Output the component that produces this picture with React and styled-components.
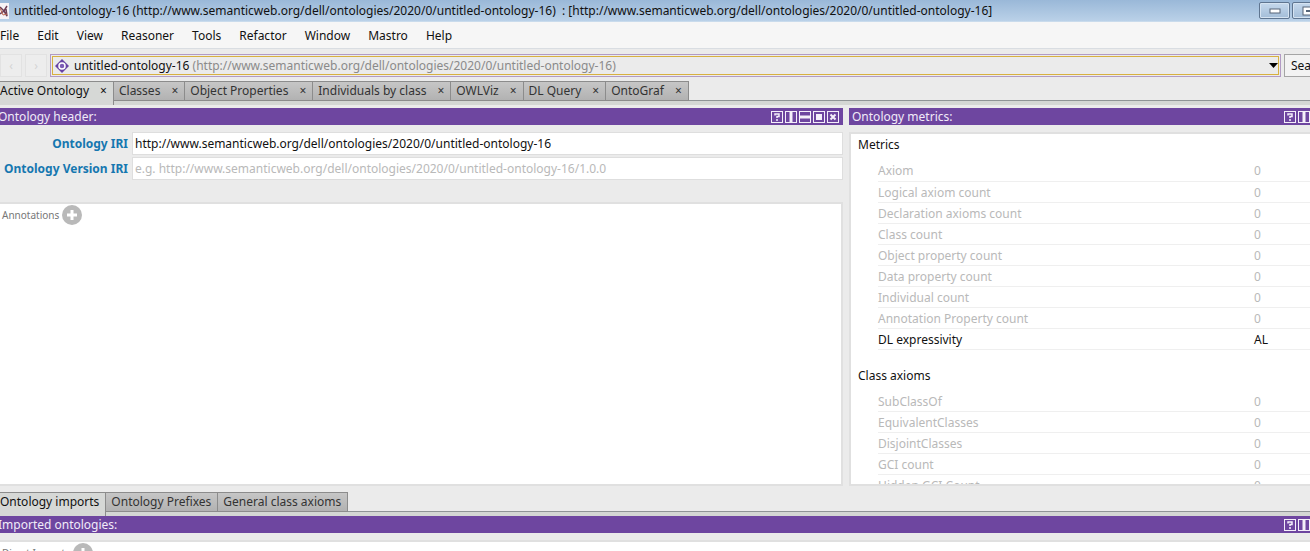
import React, { useState } from 'react';
import styled, { createGlobalStyle } from 'styled-components';

const GlobalStyle = createGlobalStyle`
  * {
    box-sizing: border-box;
  }
  body {
    margin: 0;
    overflow: hidden;
    background: #ebebeb;
    color: #111;
    font: 12px/20px "Noto Sans", "Open Sans", sans-serif;
  }
  button, input {
    font: inherit;
    color: inherit;
  }
`;

/* the window is wider than the screen on both sides */
const Window = styled.div`
  display: flex;
  flex-direction: column;
  height: 100vh;
  margin: 0 -51px 0 -5px;
`;

const TitleBar = styled.header`
  display: flex;
  align-items: center;
  flex: none;
  height: 22px;
  padding: 0 5px 0 0;
  background: linear-gradient(#9ab8d8, #bad1e8);
  border-bottom: 1px solid #c9dbec;
  white-space: pre;
`;

const AppIcon = styled.svg`
  flex: none;
  width: 14px;
  height: 16px;
  margin-right: 5px;
`;

const WindowTitle = styled.h1`
  flex: 1;
  margin: 0;
  font-size: 12px;
  line-height: 20px;
  font-weight: 400;
`;

const WindowButton = styled.button`
  display: flex;
  align-items: center;
  justify-content: center;
  width: 31px;
  height: 17px;
  margin-left: 2px;
  padding: 0;
  border: 1px solid #5f7590;
  border-radius: 2px;
  background: linear-gradient(#c5d8ec, #a3bdd8);
  box-shadow: inset 0 0 0 1px #d5e3f1;
`;

const MenuBar = styled.nav`
  display: flex;
  flex: none;
  gap: 18px;
  height: 27px;
  padding: 4px 5px 2px;
  background: #f6f6f6;
  border-bottom: 1px solid #d9dde2;
`;

const MenuItem = styled.button`
  padding: 0;
  border: 0;
  background: none;
`;

const Toolbar = styled.div`
  display: flex;
  flex: none;
  gap: 3px;
  height: 32px;
  padding: 5px 5px 4px;
`;

const NavButton = styled.button`
  width: 22px;
  padding: 0;
  border: 1px solid #e2e2e2;
  background: #ededed;
  color: #d4d4d4;
`;

const OntologyPicker = styled.button`
  display: flex;
  align-items: center;
  flex: 1;
  gap: 4px;
  padding: 0 2px 0 3px;
  border: 1px solid #b29ac4;
  outline: 1px solid #d8b040;
  outline-offset: -3px;
  background: #ebebeb;
  text-align: left;
`;

const PickerText = styled.span`
  flex: 1;
  span {
    color: #8a8a8a;
  }
`;

const SearchButton = styled.button`
  width: 72px;
  padding: 0 6px;
  border: 1px solid #a5a5a5;
  background: #f3f3f3;
  text-align: left;
`;

const TabStrip = styled.div`
  display: flex;
  flex: none;
  height: 24px;
  background: linear-gradient(#ebebeb 19px, #8f9496 19px, #8f9496 20px, #d4d7d4 20px);
`;

const Tab = styled.button`
  display: flex;
  align-items: center;
  gap: 11px;
  height: ${props => props.$active ? '24px' : '20px'};
  padding: 0 6px ${props => props.$active ? '5px' : 0} 5px;
  border: solid #8c8c8c;
  border-width: 1px 1px ${props => props.$active ? 0 : '1px'} 0;
  background: ${props => props.$active ? '#d6d8d6' : 'linear-gradient(#c6c6c6, #b2b2b2)'};
  color: ${props => props.$active ? '#111' : '#333'};
  white-space: nowrap;
`;

const Workspace = styled.main`
  display: grid;
  flex: 1;
  grid-template-columns: 848fr 507fr;
  gap: 6px;
  min-height: 0;
  padding: 3px 5px 6px 0;
`;

const Pane = styled.section`
  display: flex;
  flex-direction: column;
  min-width: 0;
  min-height: 0;
`;

const PaneBar = styled.div`
  display: flex;
  align-items: center;
  flex: none;
  gap: 2px;
  height: 17px;
  padding: 0 4px 0 3px;
  background: #6e46a0;
  color: #f1ebf8;
`;

const PaneTitle = styled.h2`
  flex: 1;
  margin: 0;
  font-size: 12px;
  line-height: 17px;
  font-weight: 400;
`;

const PaneButton = styled.button`
  display: flex;
  width: 12px;
  height: 12px;
  padding: 0;
  border: 0;
  background: none;
`;

const HeaderForm = styled.form`
  display: grid;
  flex: none;
  grid-template-columns: 133px 1fr;
  gap: 2px 4px;
  align-items: center;
  padding: 7px 0 22px;
`;

const FieldLabel = styled.label`
  color: #1577b0;
  font-weight: 700;
  text-align: right;
  white-space: nowrap;
`;

const Field = styled.input`
  width: 100%;
  height: 23px;
  padding: 0 2px;
  border: 1px solid #dedede;
  background: #fff;
  &::placeholder {
    color: #b9b9b9;
    opacity: 1;
  }
`;

const Sheet = styled.div`
  flex: 1;
  min-height: ${props => props.$minHeight || 0};
  margin-top: ${props => props.$gap || 0};
  border: 2px solid #e0e0e0;
  background: #fff;
  overflow: hidden;
`;

const AddRow = styled.div`
  display: flex;
  align-items: center;
  gap: 3px;
  padding: 1px 5px;
  color: #777;
  font-size: 10px;
`;

const AddButton = styled.button`
  display: flex;
  padding: 0;
  border: 0;
  background: none;
`;

const MetricTable = styled.table`
  width: calc(100% - 27px);
  margin: 0 0 15px 27px;
  border-collapse: collapse;
  table-layout: fixed;
  caption {
    margin-left: -20px;
    padding: 1px 0 5px;
    text-align: left;
  }
  th, td {
    height: 21px;
    padding: 2px 0 0;
    border-bottom: 1px solid #efefef;
    font-weight: 400;
    line-height: 18px;
    text-align: left;
  }
  th {
    width: 376px;
  }
`;

const MetricRow = styled.tr`
  color: ${props => props.$strong ? '#111' : '#b9b9b9'};
`;

const Lower = styled.section`
  display: flex;
  flex: 0 0 59px;
  flex-direction: column;
  padding-right: 5px;
  overflow: hidden;
`;

const viewTabs = [
    'Active Ontology',
    'Classes',
    'Object Properties',
    'Individuals by class',
    'OWLViz',
    'DL Query',
    'OntoGraf'
];

const lowerTabs = ['Ontology imports', 'Ontology Prefixes', 'General class axioms'];

const menus = ['File', 'Edit', 'View', 'Reasoner', 'Tools', 'Refactor', 'Window', 'Mastro', 'Help'];

const metrics = [
    ['Axiom', '0'],
    ['Logical axiom count', '0'],
    ['Declaration axioms count', '0'],
    ['Class count', '0'],
    ['Object property count', '0'],
    ['Data property count', '0'],
    ['Individual count', '0'],
    ['Annotation Property count', '0'],
    ['DL expressivity', 'AL']
];

const classAxioms = [
    ['SubClassOf', '0'],
    ['EquivalentClasses', '0'],
    ['DisjointClasses', '0'],
    ['GCI count', '0'],
    ['Hidden GCI Count', '0']
];

const paneIcons = {
    'Help': <path d="M4 4.500V3h4v2.500H6V7M6 8v2" />,
    'Split vertically': <path d="M6 1v10" strokeWidth="3" />,
    'Split horizontally': <path d="M1 6h10" strokeWidth="3" />,
    'Float': <path d="M3 6h6" strokeWidth="6" />,
    'Close': <path d="M3.500 3.500l5 5M8.500 3.500l-5 5" strokeWidth="2" />
};

const PaneHeading = ({ title }) => (
    <PaneBar>
        <PaneTitle>{title}</PaneTitle>
        {Object.keys(paneIcons).map(name => (
            <PaneButton key={name} type="button" aria-label={name}>
                <svg width="12" height="12" viewBox="0 0 12 12" fill="none" stroke="#f4effa" strokeWidth="1.500">
                    <rect x="0.500" y="0.500" width="11" height="11" strokeWidth="1" />
                    {paneIcons[name]}
                </svg>
            </PaneButton>
        ))}
    </PaneBar>
);

const Add = ({ label }) => (
    <AddRow>
        {label}
        <AddButton type="button" aria-label={`Add ${label}`}>
            <svg width="20" height="20" viewBox="0 0 20 20">
                <circle cx="10" cy="10" r="10" fill="#b9b9b9" />
                <path d="M10 5v10M5 10h10" stroke="#fff" strokeWidth="3" />
            </svg>
        </AddButton>
    </AddRow>
);

const Metrics = ({ title, rows }) => (
    <MetricTable>
        <caption>{title}</caption>
        <tbody>
            {rows.map(([name, value]) => (
                <MetricRow key={name} $strong={value !== '0'}>
                    <th scope="row">{name}</th>
                    <td>{value}</td>
                </MetricRow>
            ))}
        </tbody>
    </MetricTable>
);

const App = () => {
    const [view, setView] = useState(viewTabs[0]);
    const [lower, setLower] = useState(lowerTabs[0]);
    const [iri, setIri] = useState('http://www.semanticweb.org/dell/ontologies/2020/0/untitled-ontology-16');

    return (
        <Window>
            <GlobalStyle />
            <TitleBar>
                <AppIcon viewBox="0 0 14 16">
                    <path d="M0 0h14v16H0z" fill="#f7f3f6" />
                    <path d="M5 4l4 4 3-5M9 8l-4 3M9 8l3 5-1-7" fill="none" stroke="#6d3d55" strokeWidth="1.500" />
                    <path d="M5 5l3 7 4-1" fill="none" stroke="#c06a52" />
                </AppIcon>
                <WindowTitle>
                    {'untitled-ontology-16 (http://www.semanticweb.org/dell/ontologies/2020/0/untitled-ontology-16)  : [http://www.semanticweb.org/dell/ontologies/2020/0/untitled-ontology-16]'}
                </WindowTitle>
                <WindowButton aria-label="Minimize">
                    <svg width="12" height="6"><rect x="1" y="1" width="10" height="4" fill="#fff" stroke="#566579" /></svg>
                </WindowButton>
                <WindowButton aria-label="Restore">
                    <svg width="12" height="10"><rect x="1" y="1" width="9" height="8" fill="#fff" stroke="#566579" /><path d="M4 5h4" stroke="#566579" strokeWidth="2" /></svg>
                </WindowButton>
                <WindowButton aria-label="Close">×</WindowButton>
            </TitleBar>

            <MenuBar>
                {menus.map(name => <MenuItem key={name}>{name}</MenuItem>)}
            </MenuBar>

            <Toolbar>
                <NavButton aria-label="Back">‹</NavButton>
                <NavButton aria-label="Forward">›</NavButton>
                <OntologyPicker>
                    <svg width="16" height="16" viewBox="0 0 16 16">
                        <path d="M8 1l7 7-7 7-7-7z" fill="#6843a4" />
                        <circle cx="8" cy="8" r="3" fill="#7d5cb5" stroke="#fff" strokeWidth="1.500" />
                    </svg>
                    <PickerText>
                        untitled-ontology-16 <span>(http://www.semanticweb.org/dell/ontologies/2020/0/untitled-ontology-16)</span>
                    </PickerText>
                    <svg width="9" height="5"><path d="M0 0h9L4.500 5z" /></svg>
                </OntologyPicker>
                <SearchButton>Search...</SearchButton>
            </Toolbar>

            <TabStrip>
                {viewTabs.map(name => (
                    <Tab key={name} $active={name === view} onClick={() => setView(name)}>
                        {name}
                        <span>×</span>
                    </Tab>
                ))}
            </TabStrip>

            <Workspace>
                <Pane>
                    <PaneHeading title="Ontology header:" />
                    <HeaderForm>
                        <FieldLabel htmlFor="iri">Ontology IRI</FieldLabel>
                        <Field id="iri" value={iri} onChange={e => setIri(e.target.value)} />
                        <FieldLabel htmlFor="version">Ontology Version IRI</FieldLabel>
                        <Field
                            id="version"
                            placeholder="e.g. http://www.semanticweb.org/dell/ontologies/2020/0/untitled-ontology-16/1.0.0"
                        />
                    </HeaderForm>
                    <Sheet>
                        <Add label="Annotations" />
                    </Sheet>
                </Pane>
                <Pane>
                    <PaneHeading title="Ontology metrics:" />
                    <Sheet $gap="7px">
                        <Metrics title="Metrics" rows={metrics} />
                        <Metrics title="Class axioms" rows={classAxioms} />
                    </Sheet>
                </Pane>
            </Workspace>

            <Lower>
                <TabStrip>
                    {lowerTabs.map(name => (
                        <Tab key={name} $active={name === lower} onClick={() => setLower(name)}>{name}</Tab>
                    ))}
                </TabStrip>
                <PaneHeading title="Imported ontologies:" />
                <Sheet $gap="7px" $minHeight="40px">
                    <Add label="Direct Imports" />
                </Sheet>
            </Lower>
        </Window>
    );
};

export default App;
